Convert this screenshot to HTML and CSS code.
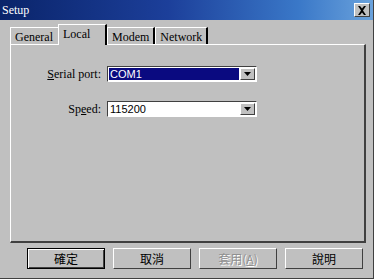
FILE: index.html
```html
<!DOCTYPE html>
<html>
<head>
<meta charset="utf-8">
<link rel="stylesheet" href="styles.css">
</head>
<body>
<div class="window">
  <div class="titlebar">
    <span class="title">Setup</span>
    <span class="close">
      <svg width="10" height="9" viewBox="0 0 10 9"><path d="M1 0h2l2 2.5L7 0h2L6 4.5 9 9H7L5 6.5 3 9H1l3-4.5z" fill="#000"/></svg>
    </span>
  </div>
  <div class="body">
    <div class="tabs">
      <div class="tab first">General</div>
      <div class="tab active">Local</div>
      <div class="tab">Modem</div>
      <div class="tab">Network</div>
    </div>
    <div class="panel">
      <div class="row">
        <label class="lbl"><u>S</u>erial port:</label>
        <div class="combo">
          <div class="value selected">COM1</div>
          <div class="arrow"><svg width="7" height="4" viewBox="0 0 7 4"><path d="M0 0h7L3.5 4z" fill="#000"/></svg></div>
        </div>
      </div>
      <div class="row">
        <label class="lbl">Sp<u>e</u>ed:</label>
        <div class="combo">
          <div class="value">115200</div>
          <div class="arrow"><svg width="7" height="4" viewBox="0 0 7 4"><path d="M0 0h7L3.5 4z" fill="#000"/></svg></div>
        </div>
      </div>
    </div>
    <div class="buttons">
      <button class="btn default">確定</button>
      <button class="btn">取消</button>
      <button class="btn disabled">套用(<u>A</u>)</button>
      <button class="btn">說明</button>
    </div>
  </div>
</div>
</body>
</html>
```
FILE: styles.css
```css
html, body {
  margin: 0;
  padding: 0;
  background: #c0c0c0;
}
.window {
  width: 374px;
  height: 279px;
  box-sizing: border-box;
  background: #c0c0c0;
  border-right: 1px solid #404040;
  border-bottom: 1px solid #404040;
  display: flex;
  flex-direction: column;
  font-family: "Liberation Serif", serif;
}
.titlebar {
  height: 20px;
  background: linear-gradient(to right, #0a246a 0%, #1c3f9a 45%, #3a78c8 80%, #6aa2dc 100%);
  display: flex;
  align-items: center;
  justify-content: space-between;
  padding: 0 3px 0 2px;
}
.title {
  color: #fff;
  font-family: "Liberation Serif", serif;
  font-size: 12px;
}
.close {
  width: 16px;
  height: 14px;
  box-sizing: border-box;
  background: #c0c0c0;
  border: 1px solid;
  border-color: #fff #404040 #404040 #fff;
  display: flex;
  align-items: center;
  justify-content: center;
}
.body {
  flex: 1;
  display: flex;
  flex-direction: column;
  padding: 4px 7px 0 10px;
}
.tabs {
  display: flex;
  height: 20px;
  align-items: flex-end;
}
.tab {
  height: 17px;
  box-sizing: border-box;
  padding: 2px 4px 0 4px;
  font-size: 12px;
  line-height: 15px;
  color: #000;
  border-top: 1px solid #fff;
  border-left: 1px solid #fff;
  border-right: 2px solid #000;
}
.tab.first {
  width: 48px;
  border-right: none;
  padding-left: 4px;
}
.tab.active {
  height: 21px;
  width: 49px;
  padding: 2px 0 0 4px;
  background: #c0c0c0;
  margin-bottom: -1px;
  position: relative;
  z-index: 1;
}
.panel {
  height: 199px;
  box-sizing: border-box;
  border-top: 1px solid #fff;
  border-left: 1px solid #fff;
  border-right: 2px solid #404040;
  border-bottom: 2px solid #404040;
  display: flex;
  flex-direction: column;
  gap: 19px;
  padding-top: 21px;
}
.row {
  display: flex;
  align-items: center;
}
.lbl {
  width: 90px;
  text-align: right;
  font-size: 12px;
  padding-right: 6px;
  color: #000;
}
.combo {
  width: 150px;
  height: 16px;
  box-sizing: border-box;
  background: #fff;
  border: 1px solid;
  border-color: #404040 #fff #fff #404040;
  display: flex;
  padding: 1px;
}
.value {
  flex: 1;
  font-family: "Liberation Sans", sans-serif;
  font-size: 11px;
  line-height: 12px;
  padding-left: 1px;
  color: #000;
}
.value.selected {
  background: #0a0a80;
  color: #fff;
}
.arrow {
  width: 15px;
  background: #c0c0c0;
  border: 1px solid;
  border-color: #fff #404040 #404040 #fff;
  box-sizing: border-box;
  display: flex;
  align-items: center;
  justify-content: center;
  margin-left: 1px;
}
.buttons {
  display: flex;
  gap: 8px;
  padding: 5px 0 0 17px;
}
.btn {
  width: 78px;
  height: 21px;
  box-sizing: border-box;
  background: #c0c0c0;
  border: 1px solid;
  border-color: #fff #404040 #404040 #fff;
  font-family: "Noto Sans CJK TC", sans-serif;
  font-size: 12px;
  line-height: 17px;
  padding: 0;
  color: #000;
}
.btn.default {
  border: 1px solid #000;
  box-shadow: inset 1px 1px 0 #fff, inset -1px -1px 0 #404040;
}
.btn.disabled {
  color: #909090;
  text-shadow: 1px 1px 0 #fff;
}
u { text-decoration: underline; }
```
